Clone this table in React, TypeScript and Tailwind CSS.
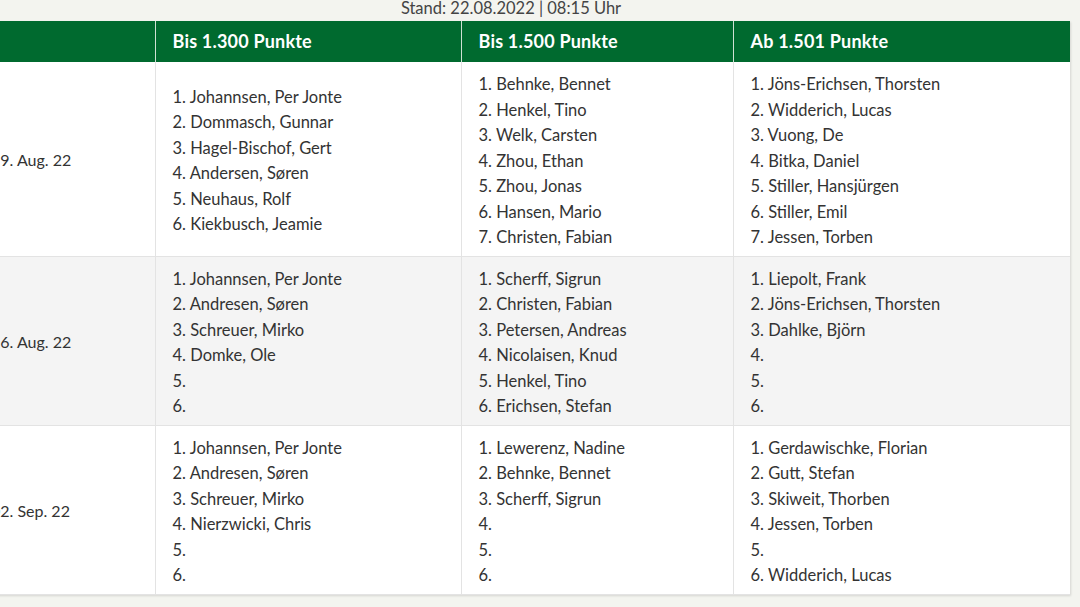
const rows = [
  {
    date: "19. Aug. 22",
    cols: [
      ["Johannsen, Per Jonte", "Dommasch, Gunnar", "Hagel-Bischof, Gert", "Andersen, Søren", "Neuhaus, Rolf", "Kiekbusch, Jeamie"],
      ["Behnke, Bennet", "Henkel, Tino", "Welk, Carsten", "Zhou, Ethan", "Zhou, Jonas", "Hansen, Mario", "Christen, Fabian"],
      ["Jöns-Erichsen, Thorsten", "Widderich, Lucas", "Vuong, De", "Bitka, Daniel", "Stiller, Hansjürgen", "Stiller, Emil", "Jessen, Torben"],
    ],
  },
  {
    date: "26. Aug. 22",
    cols: [
      ["Johannsen, Per Jonte", "Andresen, Søren", "Schreuer, Mirko", "Domke, Ole", "", ""],
      ["Scherff, Sigrun", "Christen, Fabian", "Petersen, Andreas", "Nicolaisen, Knud", "Henkel, Tino", "Erichsen, Stefan"],
      ["Liepolt, Frank", "Jöns-Erichsen, Thorsten", "Dahlke, Björn", "", "", ""],
    ],
  },
  {
    date: "02. Sep. 22",
    cols: [
      ["Johannsen, Per Jonte", "Andresen, Søren", "Schreuer, Mirko", "Nierzwicki, Chris", "", ""],
      ["Lewerenz, Nadine", "Behnke, Bennet", "Scherff, Sigrun", "", "", ""],
      ["Gerdawischke, Florian", "Gutt, Stefan", "Skiweit, Thorben", "Jessen, Torben", "", "Widderich, Lucas"],
    ],
  },
]

const heads = ["Bis 1.300 Punkte", "Bis 1.500 Punkte", "Ab 1.501 Punkte"]

export default function App() {
  return (
    <div className="w-[1080px] h-[607px] overflow-hidden bg-[#f3f4ef] text-[#333] font-['Lato',sans-serif]">
      <div className="ml-[-26px] w-[1096px]">
        <div className="h-[21px] text-center text-[16.5px] leading-[16px] text-[#444] pr-[22px]">
          Stand: 22.08.2022 | 08:15 Uhr
        </div>
        <table className="w-[1096px] table-fixed border-collapse bg-white shadow-[1px_1px_2px_rgba(0,0,0,0.12)]">
          <colgroup>
            <col className="w-[181px]" />
            <col className="w-[306px]" />
            <col className="w-[272px]" />
            <col className="w-[337px]" />
          </colgroup>
          <thead>
            <tr className="bg-[#006a2f] text-white h-[41px]">
              <th className="border-r border-[#cfe0d4]"></th>
              {heads.map((h, i) => (
                <th
                  key={h}
                  className={
                    "text-left font-bold text-[18px] tracking-[0.2px] pl-[17px] " +
                    (i < 2 ? "border-r border-[#cfe0d4]" : "")
                  }
                >
                  {h}
                </th>
              ))}
            </tr>
          </thead>
          <tbody>
            {rows.map((r, ri) => (
              <tr key={r.date} className={(ri === 1 ? "bg-[#f4f4f4] " : "bg-white ") + "border-b border-[#e3e3e3]"}>
                <td className="pl-[17px] pt-[3px] text-[16px] align-middle border-r border-[#e3e3e3]">{r.date}</td>
                {r.cols.map((c, ci) => (
                  <td
                    key={ci}
                    className={"pl-[17px] pt-[10px] pb-[5px] align-middle text-[16.5px] leading-[25.5px] " + (ci < 2 ? "border-r border-[#e3e3e3]" : "")}
                  >
                    {c.map((n, ni) => (
                      <div key={ni}>
                        {ni + 1}. {n}
                      </div>
                    ))}
                  </td>
                ))}
              </tr>
            ))}
          </tbody>
        </table>
      </div>
    </div>
  )
}
